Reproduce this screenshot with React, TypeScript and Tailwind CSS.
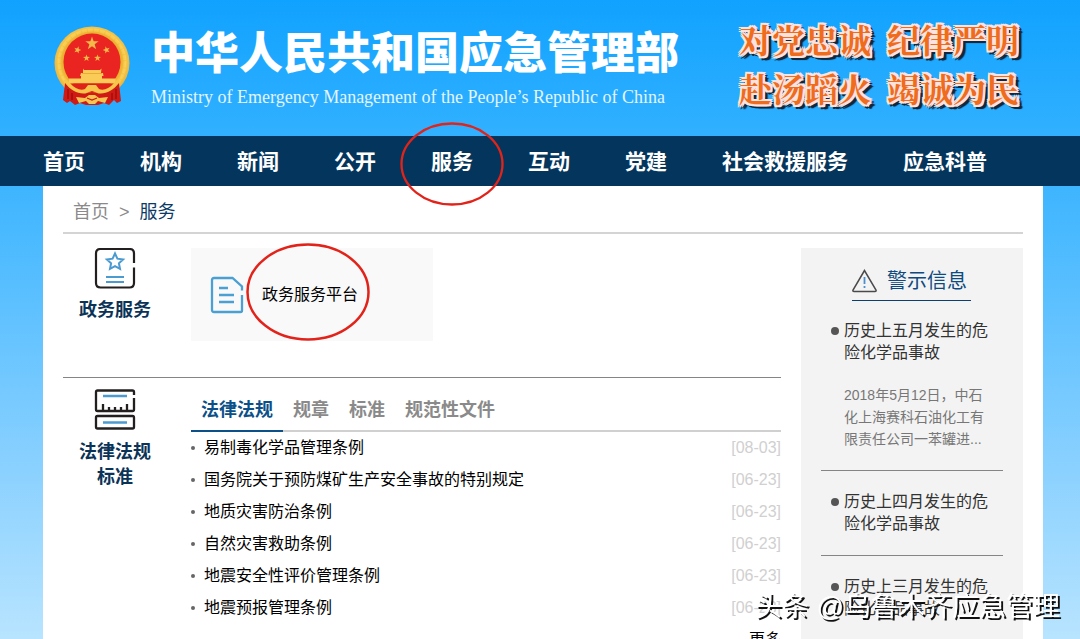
import React from 'react';

const cjk = "font-['Liberation_Sans','Noto_Sans_CJK_SC',sans-serif]";

const nav = ['首页', '机构', '新闻', '公开', '服务', '互动', '党建', '社会救援服务', '应急科普'];

const laws = [
  { title: '易制毒化学品管理条例', date: '[08-03]' },
  { title: '国务院关于预防煤矿生产安全事故的特别规定', date: '[06-23]' },
  { title: '地质灾害防治条例', date: '[06-23]' },
  { title: '自然灾害救助条例', date: '[06-23]' },
  { title: '地震安全性评价管理条例', date: '[06-23]' },
  { title: '地震预报管理条例', date: '[06-23]' },
];

const tabs = ['法律法规', '规章', '标准', '规范性文件'];

const warnings = [
  { title: '历史上五月发生的危险化学品事故', text: '2018年5月12日，中石化上海赛科石油化工有限责任公司一苯罐进...' },
  { title: '历史上四月发生的危险化学品事故', text: '' },
  { title: '历史上三月发生的危险化学品事故', text: '' },
];

function Star({ x, y, r, rot = 0 }: { x: number; y: number; r: number; rot?: number }) {
  const pts = Array.from({ length: 10 }, (_, i) => {
    const a = (i * Math.PI) / 5 - Math.PI / 2 + rot;
    const d = i % 2 ? r * 0.4 : r;
    return `${x + Math.cos(a) * d},${y + Math.sin(a) * d}`;
  }).join(' ');
  return <polygon points={pts} fill="#f3b84a" />;
}

function Emblem() {
  return (
    <svg width="76" height="80" viewBox="0 0 76 80" aria-hidden="true">
      <defs>
        <radialGradient id="gold" cx="50%" cy="48%" r="52%">
          <stop offset="0.72" stopColor="#e9a92a" />
          <stop offset="0.86" stopColor="#f7c84a" />
          <stop offset="1" stopColor="#e8b23c" />
        </radialGradient>
      </defs>
      <ellipse cx="38" cy="37" rx="37.5" ry="36.5" fill="url(#gold)" />
      <ellipse cx="38" cy="36.5" rx="33" ry="32.5" fill="none" stroke="#ffdf6e" strokeWidth="3" strokeDasharray="5 1" opacity=".35" />
      <circle cx="38" cy="36" r="28.5" fill="#ea2420" />
      <Star x={38} y={17.5} r={7} />
      <Star x={23.5} y={24} r={3.8} rot={0.3} />
      <Star x={52.5} y={24} r={3.8} rot={-0.3} />
      <Star x={32.5} y={32} r={3.6} />
      <Star x={43.5} y={32} r={3.6} />
      <path d="M29 42.5L30 44H46L47.5 42.500 47 47H49L49.500 50H48V52.500H61.500V57.500H15V52.500H27V50H26L27 47H29Z" fill="#fbcb57" />
      <path d="M28 47.500h20" stroke="#e9ab3a" strokeWidth="1" />
      <path d="M15 57.500H61C56 64 48 66.500 38 66.500S20 64 15 57.500Z" fill="#de2119" />
      <path d="M11 52L16 57C21 63 27 65 31 63L34 59H42L45 63C49 65 55 63 60 57L65 52 66 61C58 67 48 70 44 67L38 65 32 67C28 70 18 67 10 61Z" fill="#f8c54b" />
      <path d="M11 57C17 65 26 69 33 67L38 66 43 67C50 69 59 65 65 57L67 75 63 77 60 74 55 79 50 77 44 79H32L26 77 21 79 16 75 13 77 9 74Z" fill="#cf1a16" />
      <path d="M14 63v10M18 67v7M58 67v7M62 63v10" stroke="#a30f0d" strokeWidth="1.5" />
      <path d="M22 71l9 1 4-3h6l4 3 9-1-3 6-7-2-3 3h-6l-3-3-7 2Z" fill="#f6c551" />
      <path d="M33 72l5 2 5-2" stroke="#cf1a16" strokeWidth="1.300" fill="none" />
    </svg>
  );
}

function ServiceIcon() {
  return (
    <svg width="42" height="42" viewBox="0 0 42 42" fill="none" aria-hidden="true">
      <path d="M40 19.500V35Q40 39.500 35.500 39.500H6.500Q2 39.500 2 35V5.500Q2 1 6.500 1H35.500Q40 1 40 5.500V15" stroke="#231f1f" strokeWidth="2.200" />
      <path d="M21 5.500l2.400 5.200 5.700.7-4.200 3.900 1.100 5.600-5-2.800-5 2.800 1.100-5.600-4.200-3.900 5.700-.7Z" stroke="#4b9ad0" strokeWidth="2" />
      <path d="M12 29h18M12 34h18" stroke="#4b9ad0" strokeWidth="2.200" />
    </svg>
  );
}

function RulerIcon() {
  return (
    <svg width="42" height="42" viewBox="0 0 42 42" fill="none" aria-hidden="true">
      <path d="M40 6V3Q40 1.500 38.500 1.500H3.500Q2 1.500 2 3V20.500Q2 22 3.500 22H38.500Q40 22 40 20.500V9M9 22v-7M15 22v-4M21 22v-4M27 22v-4M33 22v-7" stroke="#231f1f" strokeWidth="2.300" />
      <rect x="2" y="27" width="38" height="12.500" rx="1.500" stroke="#231f1f" strokeWidth="2.300" />
      <path d="M9 7h24M9 33.500h24" stroke="#4b9ad0" strokeWidth="2.500" />
    </svg>
  );
}

function DocIcon() {
  return (
    <svg width="34" height="38" viewBox="0 0 34 38" fill="none" aria-hidden="true">
      <path d="M32 19V34.500Q32 36 30.500 36H4Q2 36 2 34V4Q2 2 4 2H22.500L32 10.500V14.500" stroke="#4a9fd3" strokeWidth="2.300" />
      <path d="M9 12h9M9 19h15M9 26h15" stroke="#4a9fd3" strokeWidth="2.300" />
    </svg>
  );
}

function Slogan() {
  return (
    <p className="flex flex-col font-['Noto_Serif_CJK_SC','Noto_Sans_CJK_SC',serif] text-[33px] leading-[49px] font-bold text-[#ee6c1c] [text-shadow:1px_0_#fde3e0,-1px_0_#fde3e0,0_1px_#fde3e0,0_-1px_#fde3e0,2px_0_#fde3e0,-2px_0_#fde3e0,0_2px_#fde3e0,0_-2px_#fde3e0,2px_2px_#fde3e0,-2px_-2px_#fde3e0,2px_-2px_#fde3e0,-2px_2px_#fde3e0,3px_3px_#10283f,4px_4px_#10283f,5px_4px_1px_#10283f,1px_4px_#10283f,4px_1px_#10283f]">
      <span className="flex gap-4"><span>对党忠诚</span><span>纪律严明</span></span>
      <span className="flex gap-4"><span>赴汤蹈火</span><span>竭诚为民</span></span>
    </p>
  );
}

export default function App() {
  return (
    <div className={`relative min-h-screen bg-[linear-gradient(#10a2ff_0px,#30b0ff_130px,#4ebbff_250px,#88d0ff_460px,#b8e4ff_639px)] ${cjk}`}>
      <header>
        <div className="pl-[6px]">
          <div className="mx-auto flex h-[136px] max-w-[1000px] items-start">
            <div className="ml-[11px] pt-[26px]"><Emblem /></div>
            <div className="ml-[21px] pt-6 text-white">
              <h1 className="text-[44px] leading-[60px] font-black whitespace-nowrap">中华人民共和国应急管理部</h1>
              <p className="font-['Liberation_Serif',serif] text-[18px] leading-[26px] whitespace-nowrap text-[#e4f4ff]">Ministry of Emergency Management of the People’s Republic of China</p>
            </div>
            <div className="mr-6 ml-auto pt-[14px] whitespace-nowrap"><Slogan /></div>
          </div>
        </div>
        <nav className="bg-[#04365d] pl-[6px]">
          <ul className="mx-auto flex h-[50px] max-w-[1000px] gap-[55px] text-[21px] leading-[52px] font-bold text-white">
            {nav.map((n) => (
              <li key={n} className="relative whitespace-nowrap">
                <a href="#">{n}</a>
                {n === '服务' && (
                  <svg className="pointer-events-none absolute -top-[14px] -left-[31px] z-10" width="104" height="84" viewBox="0 0 104 84" aria-hidden="true">
                    <ellipse cx="52" cy="42" rx="50.5" ry="40.5" fill="none" stroke="#e2231a" strokeWidth="2.3" />
                  </svg>
                )}
              </li>
            ))}
          </ul>
        </nav>
      </header>

      <div className="pl-[6px]">
        <main className="mx-auto max-w-[1000px] bg-white px-5">
          <div className="flex h-12 items-center gap-[10px] border-b-2 border-[#d4d4d4] pt-[6px] pl-[10px] text-[18px]">
            <a href="#" className="text-[#8a8a8a]">首页</a>
            <span className="text-[#8a8a8a]">&gt;</span>
            <span className="text-[#0b3a66]">服务</span>
          </div>

          <div className="flex gap-5 pt-[14px]">
            <div className="min-w-0 flex-1">
              <section className="flex h-[130px] gap-6 border-b border-[#858585]">
                <div className="flex w-[104px] flex-col items-center">
                  <ServiceIcon />
                  <h2 className="mt-2 text-[18px] leading-[25px] font-bold text-[#0b3357]">政务服务</h2>
                </div>
                <a href="#" className="relative flex h-[93px] w-[242px] items-center gap-[18px] bg-[#f9f9f9] pl-[19px] text-[16px] text-black">
                  <DocIcon />
                  <span>政务服务平台</span>
                  <svg className="pointer-events-none absolute -top-[5px] left-[55px]" width="124" height="98" viewBox="0 0 124 98" aria-hidden="true">
                    <ellipse cx="62" cy="49" rx="60.5" ry="47.5" fill="none" stroke="#e2231a" strokeWidth="2.5" />
                  </svg>
                </a>
              </section>

              <section className="flex gap-6 pt-[11px]">
                <div className="flex w-[104px] flex-col items-center">
                  <RulerIcon />
                  <h2 className="mt-[9px] text-center text-[18px] leading-[25px] font-bold text-[#0b3357]">法律法规<br />标准</h2>
                </div>
                <div className="flex min-w-0 flex-1 flex-col">
                  <div role="tablist" className="flex h-[43px] border-b-2 border-[#d0d0d0] text-[18px] font-bold">
                    {tabs.map((t, i) => (
                      <button key={t} role="tab" aria-selected={i === 0} className={i === 0 ? 'h-[43px] border-b-2 border-[#0b5088] px-[10px] pt-[2px] text-[#0b5088]' : 'h-[41px] px-[10px] pt-[2px] text-[#8a8a8a]'}>{t}</button>
                    ))}
                  </div>
                  <ul className="text-[16px] leading-8 text-black">
                    {laws.map((l) => (
                      <li key={l.title} className="flex items-center">
                        <span className="mr-[9px] size-1 rounded-full bg-[#666]" />
                        <a href="#">{l.title}</a>
                        <span className="ml-auto text-[#d0d0d0]">{l.date}</span>
                      </li>
                    ))}
                  </ul>
                  <a href="#" className="self-end text-[16px] leading-8 text-black">更多</a>
                </div>
              </section>
            </div>

            <aside className="w-[222px] bg-[#f3f3f3] px-5 pt-3">
              <h2 className="mr-auto mb-[19px] ml-[31px] flex h-[41px] w-[119px] items-center gap-[10px] border-b border-[#0b3f70] pt-[2px] text-[20px] whitespace-nowrap text-[#0e4a80]">
                <svg width="25" height="24" viewBox="0 0 25 24" fill="none" aria-hidden="true">
                  <path d="M12.500 1.500L1 21Q.5 22.500 2 22.500H23Q24.500 22.500 24 21Z" stroke="#4a4a4a" strokeWidth="1.500" />
                  <path d="M12.500 8v7M12.500 17v2" stroke="#4b8fd0" strokeWidth="1.800" />
                </svg>
                警示信息
              </h2>
              <ul>
                {warnings.map((w) => (
                  <li key={w.title} className="mb-5 border-b border-[#858585] pr-[11px] pb-5 pl-[10px] leading-[22px]">
                    <div className="flex gap-[5px]">
                      <span className="mt-[7px] size-2 shrink-0 rounded-full bg-[#555]" />
                      <a href="#" className="text-[16px] text-[#333]">{w.title}</a>
                    </div>
                    {w.text && <p className="mt-5 pl-[13px] text-[14px] text-[#777]">{w.text}</p>}
                  </li>
                ))}
              </ul>
            </aside>
          </div>
        </main>
      </div>

      <p className="pointer-events-none fixed right-5 bottom-3 text-[27px] leading-10 whitespace-nowrap text-white [text-shadow:2px_2px_0_#111]">头条 @乌鲁木齐应急管理</p>
    </div>
  );
}
